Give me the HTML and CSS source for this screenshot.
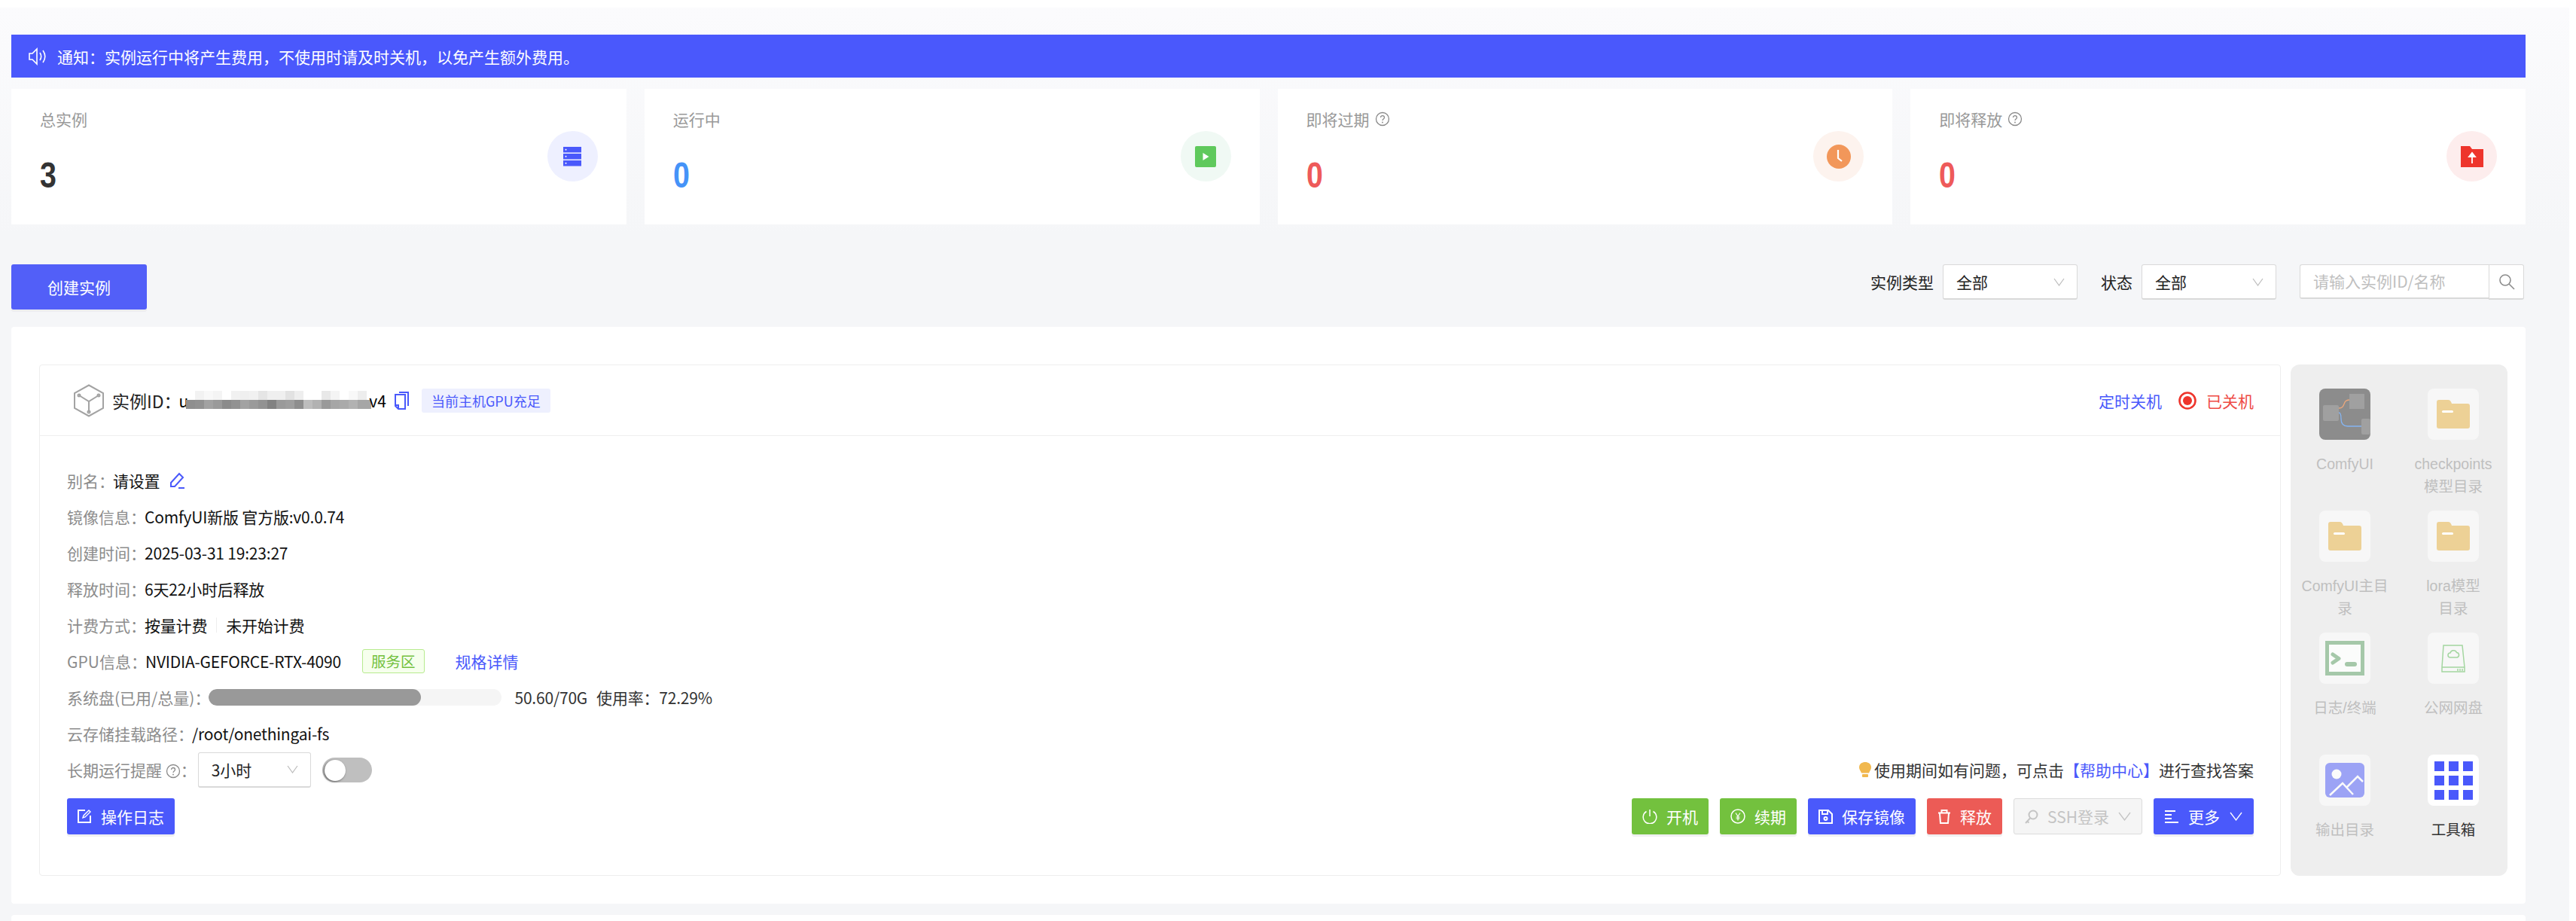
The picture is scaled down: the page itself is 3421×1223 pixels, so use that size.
FILE: index.html
```html
<!DOCTYPE html>
<html lang="zh-CN">
<head>
    <meta charset="UTF-8">
    <meta name="viewport" content="width=device-width, initial-scale=1.0">
    <title>实例管理</title>
    <link rel="stylesheet" href="styles.css">
</head>
<body>
    <div class="page">
        <!-- 通知 -->
        <div class="notice">
            <svg class="notice-icon" viewBox="0 0 26 26" fill="none" stroke="#fff" stroke-width="1.6">
                <path d="M2 9h4l6-6v20l-6-6H2z"/>
                <path d="M16 8c2 3 2 7 0 10M20 5c3.500 5 3.500 11 0 16"/>
            </svg>
            <span>通知：实例运行中将产生费用，不使用时请及时关机，以免产生额外费用。</span>
        </div>

        <!-- 统计卡片 -->
        <div class="stats">
            <div class="stat-card">
                <div class="stat-text">
                    <div class="stat-label">总实例</div>
                    <div class="stat-num num-dark">3</div>
                </div>
                <div class="stat-circle circle-blue">
                    <svg width="26" height="26" viewBox="0 0 26 26" fill="#4a59fb">
                        <rect x="1" y="0" width="24" height="7.500"/>
                        <rect x="1" y="9" width="24" height="7.500"/>
                        <rect x="1" y="18" width="24" height="7.500"/>
                        <circle cx="4.500" cy="3.700" r="1" fill="#fff"/>
                        <circle cx="4.500" cy="12.700" r="1" fill="#fff"/>
                        <circle cx="4.500" cy="21.700" r="1" fill="#fff"/>
                    </svg>
                </div>
            </div>
            <div class="stat-card">
                <div class="stat-text">
                    <div class="stat-label">运行中</div>
                    <div class="stat-num num-blue">0</div>
                </div>
                <div class="stat-circle circle-green">
                    <svg width="28" height="28" viewBox="0 0 28 28">
                        <rect width="28" height="28" rx="2" fill="#5fc95c"/>
                        <path d="M10.500 9l8 5-8 5z" fill="#fff"/>
                    </svg>
                </div>
            </div>
            <div class="stat-card">
                <div class="stat-text">
                    <div class="stat-label">即将过期 <svg class="help-icon" viewBox="0 0 20 20"><circle cx="10" cy="10" r="8.500" fill="none" stroke="#8a8a8a" stroke-width="1.300"/><path d="M7.500 8c0-3.300 5-3.300 5 0 0 2-2.500 2-2.500 4" fill="none" stroke="#8a8a8a" stroke-width="1.300"/><circle cx="10" cy="14.500" r=".9" fill="#8a8a8a"/></svg></div>
                    <div class="stat-num num-red">0</div>
                </div>
                <div class="stat-circle circle-orange">
                    <svg width="32" height="32" viewBox="0 0 32 32">
                        <circle cx="16" cy="16" r="16" fill="#f2975a"/>
                        <path d="M15 7v11l5 4" fill="none" stroke="#fff" stroke-width="2.200"/>
                    </svg>
                </div>
            </div>
            <div class="stat-card">
                <div class="stat-text">
                    <div class="stat-label">即将释放 <svg class="help-icon" viewBox="0 0 20 20"><circle cx="10" cy="10" r="8.500" fill="none" stroke="#8a8a8a" stroke-width="1.300"/><path d="M7.500 8c0-3.300 5-3.300 5 0 0 2-2.500 2-2.500 4" fill="none" stroke="#8a8a8a" stroke-width="1.300"/><circle cx="10" cy="14.500" r=".9" fill="#8a8a8a"/></svg></div>
                    <div class="stat-num num-red">0</div>
                </div>
                <div class="stat-circle circle-red">
                    <svg width="30" height="28" viewBox="0 0 30 28">
                        <path d="M0 0h12l3 4h15v24H0z" fill="#ee352c"/>
                        <path d="M15 23V10M11 14l4-5 4 5z" fill="#fff" stroke="#fff" stroke-width="1.800"/>
                    </svg>
                </div>
            </div>
        </div>

        <!-- 工具栏 -->
        <div class="toolbar">
            <button class="create-btn">创建实例</button>
            <div class="filters">
                <span class="filter-label">实例类型</span>
                <div class="select">全部<svg class="arrow" viewBox="0 0 15 11"><path d="M1 1l6.500 9L14 1" fill="none" stroke="#bbb" stroke-width="1.200"/></svg></div>
                <span class="filter-label label-status">状态</span>
                <div class="select">全部<svg class="arrow" viewBox="0 0 15 11"><path d="M1 1l6.500 9L14 1" fill="none" stroke="#bbb" stroke-width="1.200"/></svg></div>
                <div class="search">
                    <div class="search-input">请输入实例ID/名称</div>
                    <div class="search-btn">
                        <svg width="22" height="22" viewBox="0 0 22 22" fill="none" stroke="#8c8c8c" stroke-width="1.600"><circle cx="9" cy="9" r="7"/><path d="M14 14l7 7"/></svg>
                    </div>
                </div>
            </div>
        </div>

        <!-- 实例 -->
        <div class="panel">
            <div class="instance">
                <div class="instance-head">
                    <div class="head-left">
                        <svg class="cube-icon" width="42" height="44" viewBox="0 0 42 44" fill="none" stroke="#a3a3a3" stroke-width="2">
                            <path d="M21 1.500L40 12v20L21 42.500 2 32V12z"/>
                            <path d="M8 15l13 8 13-8M21 23v14"/>
                            <circle cx="8" cy="15" r="1.500"/><circle cx="34" cy="15" r="1.500"/><circle cx="21" cy="37" r="1.500"/>
                        </svg>
                        <span class="instance-title">实例ID：</span>
                        <span class="instance-id">u<svg class="mosaic" width="246" height="24" viewBox="0 0 246 24">
                            <rect x="12" width="12" height="12" fill="#f2f2f2"/><rect x="24" width="12" height="12" fill="#f8f8f8"/><rect x="36" width="12" height="12" fill="#f4f4f4"/><rect x="60" width="12" height="12" fill="#f1f1f1"/><rect x="72" width="12" height="12" fill="#efefef"/><rect x="84" width="12" height="12" fill="#f1f1f1"/><rect x="96" width="12" height="12" fill="#e5e5e5"/><rect x="108" width="12" height="12" fill="#efefef"/><rect x="120" width="12" height="12" fill="#efefef"/><rect x="132" width="12" height="12" fill="#e2e2e2"/><rect x="144" width="12" height="12" fill="#eeeeee"/><rect x="180" width="12" height="12" fill="#e8e8e8"/><rect x="192" width="12" height="12" fill="#f4f4f4"/><rect x="216" width="12" height="12" fill="#f8f8f8"/><rect x="228" width="12" height="12" fill="#ededed"/>
                            <rect y="12" width="12" height="12" fill="#8f8f8f"/><rect x="12" y="12" width="12" height="12" fill="#929292"/><rect x="24" y="12" width="12" height="12" fill="#a2a2a2"/><rect x="36" y="12" width="12" height="12" fill="#9a9a9a"/><rect x="48" y="12" width="12" height="12" fill="#8b8b8b"/><rect x="60" y="12" width="12" height="12" fill="#929292"/><rect x="72" y="12" width="12" height="12" fill="#a2a2a2"/><rect x="84" y="12" width="12" height="12" fill="#9a9a9a"/><rect x="96" y="12" width="12" height="12" fill="#929292"/><rect x="108" y="12" width="12" height="12" fill="#828282"/><rect x="120" y="12" width="12" height="12" fill="#9a9a9a"/><rect x="132" y="12" width="12" height="12" fill="#9e9e9e"/><rect x="144" y="12" width="12" height="12" fill="#8e8e8e"/><rect x="156" y="12" width="12" height="12" fill="#bdbdbd"/><rect x="168" y="12" width="12" height="12" fill="#b2b2b2"/><rect x="180" y="12" width="12" height="12" fill="#9a9a9a"/><rect x="192" y="12" width="12" height="12" fill="#a6a6a6"/><rect x="204" y="12" width="12" height="12" fill="#aaaaaa"/><rect x="216" y="12" width="12" height="12" fill="#b2b2b2"/><rect x="228" y="12" width="18" height="12" fill="#a6a6a6"/>
                        </svg>v4</span>
                        <svg class="copy-icon" width="19" height="24" viewBox="0 0 19 24" fill="none" stroke="#4a59fb" stroke-width="2">
                            <path d="M6 1h12v18"/>
                            <path d="M1 4h13v19H5l-4-4zM1 18h4v5"/>
                        </svg>
                        <span class="gpu-tag">当前主机GPU充足</span>
                    </div>
                    <div class="head-right">
                        <a class="link timer-link">定时关机</a>
                        <svg width="24" height="24" viewBox="0 0 24 24"><circle cx="12" cy="12" r="10.500" fill="none" stroke="#ee352c" stroke-width="2.600"/><circle cx="12" cy="12" r="6" fill="#ee352c"/></svg>
                        <span class="status-off">已关机</span>
                    </div>
                </div>

                <div class="instance-body">
                    <div class="info-row">
                        <span class="info-label">别名：</span><span class="info-value">请设置</span>
                        <svg class="edit-icon" width="22" height="22" viewBox="0 0 22 22" fill="none" stroke="#4a59fb" stroke-width="2"><path d="M14 2l5 5-11 12H3v-5z"/><path d="M13 21h8"/></svg>
                    </div>
                    <div class="info-row"><span class="info-label">镜像信息：</span><span class="info-value">ComfyUI新版 官方版:v0.0.74</span></div>
                    <div class="info-row"><span class="info-label">创建时间：</span><span class="info-value">2025-03-31 19:23:27</span></div>
                    <div class="info-row"><span class="info-label">释放时间：</span><span class="info-value">6天22小时后释放</span></div>
                    <div class="info-row">
                        <span class="info-label">计费方式：</span><span class="info-value">按量计费</span>
                        <span class="divider"></span><span class="info-value">未开始计费</span>
                    </div>
                    <div class="info-row">
                        <span class="info-label">GPU信息：</span><span class="info-value">NVIDIA-GEFORCE-RTX-4090</span>
                        <span class="zone-tag">服务区</span>
                        <a class="link spec-link">规格详情</a>
                    </div>
                    <div class="info-row">
                        <span class="info-label">系统盘(已用/总量)：</span>
                        <div class="progress"><div class="progress-fill" style="width: 72.29%"></div></div>
                        <span class="info-value disk-text">50.60/70G</span>
                        <span class="info-value usage-text">使用率：72.29%</span>
                    </div>
                    <div class="info-row"><span class="info-label">云存储挂载路径：</span><span class="info-value">/root/onethingai-fs</span></div>
                    <div class="info-row remind-row">
                        <span class="info-label">长期运行提醒 <svg class="help-icon" viewBox="0 0 20 20"><circle cx="10" cy="10" r="8.500" fill="none" stroke="#8a8a8a" stroke-width="1.300"/><path d="M7.500 8c0-3.300 5-3.300 5 0 0 2-2.500 2-2.500 4" fill="none" stroke="#8a8a8a" stroke-width="1.300"/><circle cx="10" cy="14.500" r=".9" fill="#8a8a8a"/></svg>：</span>
                        <div class="select select-small">3小时<svg class="arrow" viewBox="0 0 15 11"><path d="M1 1l6.500 9L14 1" fill="none" stroke="#bbb" stroke-width="1.200"/></svg></div>
                        <div class="switch"><div class="switch-knob"></div></div>
                        <div class="help-text">
                            <svg width="16" height="20" viewBox="0 0 16 20" fill="#f1b84e"><path d="M8 0c4.500 0 8 2.700 8 7 0 3-2 4.500-3 7.500H3C2 11.500 0 10 0 7c0-4.300 3.500-7 8-7z"/><rect x="4" y="16" width="8" height="4" rx="1"/></svg>
                            <span>使用期间如有问题，可点击<a class="link">【帮助中心】</a>进行查找答案</span>
                        </div>
                    </div>
                    <div class="action-row">
                        <button class="btn btn-blue">
                            <svg width="19" height="18" viewBox="0 0 19 18" fill="none" stroke="#fff" stroke-width="2"><path d="M10 1H1v16h16V8"/><path d="M7 11l1-3 7-7 2 2-7 7z" stroke-width="1.400"/></svg>
                            操作日志
                        </button>
                        <div class="action-group">
                            <button class="btn btn-green">
                                <svg width="20" height="20" viewBox="0 0 20 20" fill="none" stroke="#fff" stroke-width="1.500"><path d="M5.500 3.500a8.800 8.800 0 1 0 9 0M10 1v9"/></svg>
                                开机
                            </button>
                            <button class="btn btn-green">
                                <svg width="20" height="20" viewBox="0 0 20 20" fill="none" stroke="#fff" stroke-width="1.500"><circle cx="10" cy="10" r="9"/><path d="M7 5.500l3 4.500 3-4.500M10 10v5.500M7.500 11h5M7.500 13h5" stroke-width="1.200"/></svg>
                                续期
                            </button>
                            <button class="btn btn-blue">
                                <svg width="19" height="19" viewBox="0 0 19 19" fill="none" stroke="#fff" stroke-width="2"><path d="M1 1h12l5 5v12H1z"/><path d="M5 1v5h7V1"/><circle cx="9.500" cy="12" r="2"/></svg>
                                保存镜像
                            </button>
                            <button class="btn btn-red">
                                <svg width="18" height="19" viewBox="0 0 18 19" fill="none" stroke="#fff" stroke-width="2"><path d="M1 4.500h16M5.500 4V1h7v3M3 5l1 13h10l1-13"/></svg>
                                释放
                            </button>
                            <button class="btn btn-disabled">
                                <svg width="18" height="19" viewBox="0 0 18 19" fill="none" stroke="#c4c4c4" stroke-width="2"><circle cx="11" cy="7" r="5.500"/><path d="M7 11.500L1 18M3 15.500l2.500 2"/></svg>
                                SSH登录
                                <svg class="btn-arrow" viewBox="0 0 17 12"><path d="M1 1l7.500 10L16 1" fill="none" stroke="#c4c4c4" stroke-width="1.300"/></svg>
                            </button>
                            <button class="btn btn-blue btn-more">
                                <svg width="18" height="17" viewBox="0 0 18 17" fill="none" stroke="#fff" stroke-width="2"><path d="M0 1h14M0 6h9M0 11h9M0 16h18"/></svg>
                                更多
                                <svg class="btn-arrow" viewBox="0 0 17 12"><path d="M1 1l7.500 10L16 1" fill="none" stroke="#fff" stroke-width="1.300"/></svg>
                            </button>
                        </div>
                    </div>
                </div>
            </div>

            <!-- 应用列表 -->
            <div class="tools">
                <div class="tool">
                    <div class="tool-icon comfy-icon">
                        <svg width="68" height="69" viewBox="0 0 68 69">
                            <rect x="5" y="22" width="21" height="21" rx="2" fill="#a0a0a0"/>
                            <rect x="40" y="7" width="20" height="20" fill="#a0a0a0"/>
                            <rect x="56" y="40" width="12" height="21" rx="2" fill="#a0a0a0"/>
                            <path d="M26 26c10 0 4-11 14-11" fill="none" stroke="#eaa77c" stroke-width="1.300"/>
                            <path d="M26 32c2 0 3 2 3 8 0 7 4 10 9 10h18" fill="none" stroke="#84b4f2" stroke-width="1.300"/>
                        </svg>
                    </div>
                    <div class="tool-name">ComfyUI</div>
                </div>
                <div class="tool">
                    <div class="tool-icon"><svg class="folder" width="44" height="38" viewBox="0 0 44 38"><path d="M3 0h12c3 0 4 2 5 5h21c2 0 3 1 3 3v27c0 2-1 3-3 3H3c-2 0-3-1-3-3V3c0-2 1-3 3-3z" fill="#edd196"/><rect x="7" y="14" width="15" height="3" rx="1.500" fill="#fff"/></svg></div>
                    <div class="tool-name">checkpoints模型目录</div>
                </div>
                <div class="tool">
                    <div class="tool-icon"><svg class="folder" width="44" height="38" viewBox="0 0 44 38"><path d="M3 0h12c3 0 4 2 5 5h21c2 0 3 1 3 3v27c0 2-1 3-3 3H3c-2 0-3-1-3-3V3c0-2 1-3 3-3z" fill="#edd196"/><rect x="7" y="14" width="15" height="3" rx="1.500" fill="#fff"/></svg></div>
                    <div class="tool-name">ComfyUI主目录</div>
                </div>
                <div class="tool">
                    <div class="tool-icon"><svg class="folder" width="44" height="38" viewBox="0 0 44 38"><path d="M3 0h12c3 0 4 2 5 5h21c2 0 3 1 3 3v27c0 2-1 3-3 3H3c-2 0-3-1-3-3V3c0-2 1-3 3-3z" fill="#edd196"/><rect x="7" y="14" width="15" height="3" rx="1.500" fill="#fff"/></svg></div>
                    <div class="tool-name">lora模型<br>目录</div>
                </div>
                <div class="tool">
                    <div class="tool-icon">
                        <svg width="52" height="46" viewBox="0 0 52 46">
                            <rect x="2.500" y="2.500" width="47" height="41" fill="#fbfcfb" stroke="#a5c8a9" stroke-width="5"/>
                            <path d="M10 18l8 5.500-8 5.500" fill="none" stroke="#a5c8a9" stroke-width="5" stroke-linecap="round" stroke-linejoin="round"/>
                            <rect x="26" y="28" width="16" height="6" rx="3" fill="#a5c8a9"/>
                        </svg>
                    </div>
                    <div class="tool-name">日志/终端</div>
                </div>
                <div class="tool">
                    <div class="tool-icon">
                        <svg width="32" height="37" viewBox="0 0 32 37" fill="none" stroke="#a4d6a0" stroke-width="1.500">
                            <path d="M3 1h25l3 29v6H1v-6zM1 30h30"/>
                            <path d="M12 17a3 3 0 0 1 0-6 4.500 4.500 0 0 1 8.500-.5 3.300 3.300 0 0 1 .5 6.500z"/>
                            <path d="M22 32v3M25 32v3M28 32v3"/>
                        </svg>
                    </div>
                    <div class="tool-name">公网网盘</div>
                </div>
                <div class="tool">
                    <div class="tool-icon">
                        <svg width="52" height="46" viewBox="0 0 52 46">
                            <rect width="52" height="46" rx="6" fill="#9ca3f5"/>
                            <circle cx="15" cy="15" r="6.500" fill="#fbfbfb"/>
                            <path d="M6 43l17-16 14 15M28 33l15-15 7 7" fill="none" stroke="#fbfbfb" stroke-width="2.500"/>
                        </svg>
                    </div>
                    <div class="tool-name">输出目录</div>
                </div>
                <div class="tool tool-active">
                    <div class="tool-icon">
                        <div class="grid-icon">
                            <span></span><span></span><span></span>
                            <span></span><span></span><span></span>
                            <span></span><span></span><span></span>
                        </div>
                    </div>
                    <div class="tool-name">工具箱</div>
                </div>
            </div>
        </div>

        <div class="panel-next"></div>
    </div>
</body>
</html>
```

FILE: styles.css
```css
* {
    box-sizing: border-box;
}
html, body {
    height: 100%;
}
body {
    margin: 0;
    background-color: #fff;
    font-family: "Noto Sans CJK SC", "Noto Sans", sans-serif;
    font-size: 21px;
    color: #222;
    overflow: hidden;
}
svg {
    flex: none;
}
.page {
    height: 1213px;
    margin-top: 10px;
    margin-right: 9px;
    padding: 36px 58px 0 15px;
    background: linear-gradient(#fbfbfd, #f5f6f8 300px);
    overflow: hidden;
}
.notice {
    display: flex;
    align-items: center;
    gap: 13px;
    height: 57px;
    padding-left: 22px;
    background-color: #4a58fc;
    color: #fff;
}
.notice-icon {
    width: 26px;
    height: 26px;
}

/* stat cards */
.stats {
    display: grid;
    grid-template-columns: repeat(4, 1fr);
    gap: 24px;
    margin-top: 15px;
}
.stat-card {
    display: flex;
    justify-content: space-between;
    height: 180px;
    padding: 24px 38px 0 38px;
    background-color: #fff;
}
.stat-label {
    display: flex;
    align-items: center;
    gap: 7px;
    height: 32px;
    color: #999;
}
.stat-num {
    margin-top: 35px;
    font-family: "Liberation Sans", sans-serif;
    font-size: 48px;
    font-weight: 700;
    line-height: 48px;
    transform: scaleX(0.82);
    transform-origin: left;
}
.num-dark {
    color: #333;
}
.num-blue {
    color: #4593f8;
}
.num-red {
    color: #ee5a5a;
}
.stat-circle {
    display: flex;
    align-items: center;
    justify-content: center;
    width: 67px;
    height: 67px;
    margin-top: 32px;
    border-radius: 50%;
}
.circle-blue {
    background-color: #eef0ff;
}
.circle-green {
    background-color: #f0f9f4;
}
.circle-orange {
    background-color: #fdf3ee;
}
.circle-red {
    background-color: #fdeded;
}
.help-icon {
    width: 20px;
    height: 20px;
    vertical-align: -3px;
}

/* toolbar */
.toolbar {
    display: flex;
    justify-content: space-between;
    height: 60px;
    margin-top: 53px;
}
.create-btn {
    width: 180px;
    height: 60px;
    border: none;
    border-radius: 3px;
    background-color: #525ff8;
    color: #fff;
    font-family: inherit;
    font-size: 21px;
    box-shadow: 0 3px 0 #ececf0;
}
.filters {
    display: flex;
    align-items: flex-start;
    padding-right: 2px;
}
.filter-label {
    height: 47px;
    margin-right: 12px;
    line-height: 47px;
}
.label-status {
    margin-left: 31px;
}
.select {
    display: flex;
    align-items: center;
    justify-content: space-between;
    width: 179px;
    height: 47px;
    padding: 0 16px 0 17px;
    border: 1px solid #d9d9d9;
    border-bottom-width: 2px;
    border-radius: 3px;
    background-color: #fff;
}
.arrow {
    width: 15px;
    height: 11px;
}
.search {
    display: flex;
    margin-left: 31px;
}
.search-input {
    width: 251px;
    height: 46px;
    padding-left: 17px;
    border: 1px solid #d9d9d9;
    border-right: none;
    border-bottom-width: 2px;
    border-radius: 3px 0 0 3px;
    background-color: #fff;
    color: #bfbfbf;
    line-height: 42px;
}
.search-btn {
    display: flex;
    align-items: center;
    justify-content: center;
    width: 47px;
    height: 47px;
    border: 1px solid #d9d9d9;
    border-bottom-width: 2px;
    border-radius: 0 3px 3px 0;
    background-color: #fff;
}

/* instance panel */
.panel {
    display: flex;
    gap: 13px;
    height: 766px;
    margin-top: 23px;
    padding: 50px 24px 37px 37px;
    border-radius: 4px;
    background-color: #fff;
}
.instance {
    flex: 1;
    border: 1px solid #eee;
    border-radius: 4px;
}
.instance-head {
    display: flex;
    align-items: center;
    justify-content: space-between;
    height: 94px;
    padding: 0 35px 0 44px;
    border-bottom: 1px solid #eee;
}
.head-left, .head-right {
    display: flex;
    align-items: center;
}
.instance-title {
    margin-left: 10px;
    font-size: 23px;
}
.instance-id {
    display: flex;
    align-items: flex-end;
    margin-left: -3px;
    color: #000;
    font-size: 21px;
    line-height: 28px;
}
.mosaic {
    margin-left: -3px;
    margin-right: -3px;
    margin-bottom: 3px;
}
.copy-icon {
    margin-left: 11px;
}
.gpu-tag {
    height: 32px;
    margin-left: 17px;
    padding: 0 13px;
    border-radius: 3px;
    background-color: #eef0fe;
    color: #4a59fb;
    font-size: 18px;
    line-height: 32px;
}
.link {
    color: #4a59fb;
}
.timer-link {
    margin-right: 22px;
}
.status-off {
    margin-left: 13px;
    color: #ee4a45;
}
.instance-body {
    padding: 35px 35px 0 36px;
}
.info-row {
    display: flex;
    align-items: center;
    height: 48px;
    white-space: nowrap;
}
.info-label {
    margin-right: -2px;
    color: #8c8c8c;
}
.info-value {
    color: #111;
    letter-spacing: -0.2px;
}
.edit-icon {
    margin-left: 12px;
}
.divider {
    width: 1px;
    height: 20px;
    margin: 0 12px;
    background-color: #eee;
}
.zone-tag {
    height: 32px;
    margin-left: 28px;
    padding: 0 11px;
    border: 1px solid #b7eb8f;
    border-radius: 3px;
    background-color: #f6ffed;
    color: #73c13e;
    font-size: 19.500px;
    line-height: 30px;
}
.spec-link {
    margin-left: 41px;
}
.progress {
    width: 389px;
    height: 22px;
    margin-left: 0;
    border-radius: 11px;
    background-color: #f5f5f5;
    overflow: hidden;
}
.progress-fill {
    height: 100%;
    border-radius: 11px;
    background-color: #999;
}
.disk-text {
    margin-left: 17px;
    color: #333;
}
.usage-text {
    margin-left: 12px;
    color: #333;
}
.select-small {
    width: 150px;
    margin-left: 4px;
    padding-left: 17px;
}
.switch {
    width: 66px;
    height: 33px;
    margin-left: 15px;
    padding: 3px;
    border-radius: 17px;
    background-color: #bfbfbf;
}
.switch-knob {
    width: 28px;
    height: 28px;
    border-radius: 50%;
    background-color: #fff;
    box-shadow: -1px 1px 3px rgba(0, 0, 0, 0.5);
}
.help-text {
    display: flex;
    align-items: center;
    gap: 4px;
    margin-left: auto;
    color: #333;
}
.action-row {
    display: flex;
    justify-content: space-between;
    margin-top: 14px;
}
.action-group {
    display: flex;
    gap: 15px;
}
.btn {
    display: flex;
    align-items: center;
    justify-content: center;
    gap: 12px;
    height: 48px;
    padding: 0 14px;
    border: none;
    border-radius: 3px;
    color: #fff;
    font-family: inherit;
    font-size: 21px;
    white-space: nowrap;
    box-shadow: 0 3px 0 #f0f0f2;
}
.btn-more {
    gap: 13px;
    padding: 0 15px;
}
.btn-blue {
    background-color: #4a59fb;
}
.btn-green {
    background-color: #73c13e;
}
.btn-red {
    background-color: #ec5b56;
}
.btn-disabled {
    border: 1px solid #dcdcdc;
    background-color: #f5f5f5;
    color: #c4c4c4;
    box-shadow: none;
}
.btn-arrow {
    width: 17px;
    height: 12px;
}

/* tools column */
.tools {
    display: grid;
    grid-template-columns: 144px 144px;
    grid-auto-rows: 162px;
    flex: none;
    width: 288px;
    padding-top: 32px;
    border-radius: 12px;
    background-color: #eee;
}
.tool {
    display: flex;
    flex-direction: column;
    align-items: center;
    padding: 0 12px;
}
.tool-icon {
    display: flex;
    align-items: center;
    justify-content: center;
    flex: none;
    width: 68px;
    height: 68px;
    border-radius: 8px;
    background-color: #f7f7f7;
    overflow: hidden;
}
.comfy-icon {
    background-color: #8c8c8c;
}
.tool-name {
    margin-top: 17px;
    font-family: "Liberation Sans", "Noto Sans CJK SC", sans-serif;
    color: #bfbfbf;
    font-size: 19.500px;
    line-height: 30px;
    text-align: center;
    word-break: break-word;
}
.tool-active .tool-icon {
    background-color: #fff;
}
.tool-active .tool-name {
    color: #333;
}
.grid-icon {
    display: grid;
    grid-template-columns: repeat(3, 13px);
    grid-auto-rows: 13px;
    gap: 6px;
}
.grid-icon span {
    background-color: #4a59fb;
}
.panel-next {
    height: 40px;
    margin-top: 15px;
    border-radius: 4px;
    background-color: #fff;
}
```
